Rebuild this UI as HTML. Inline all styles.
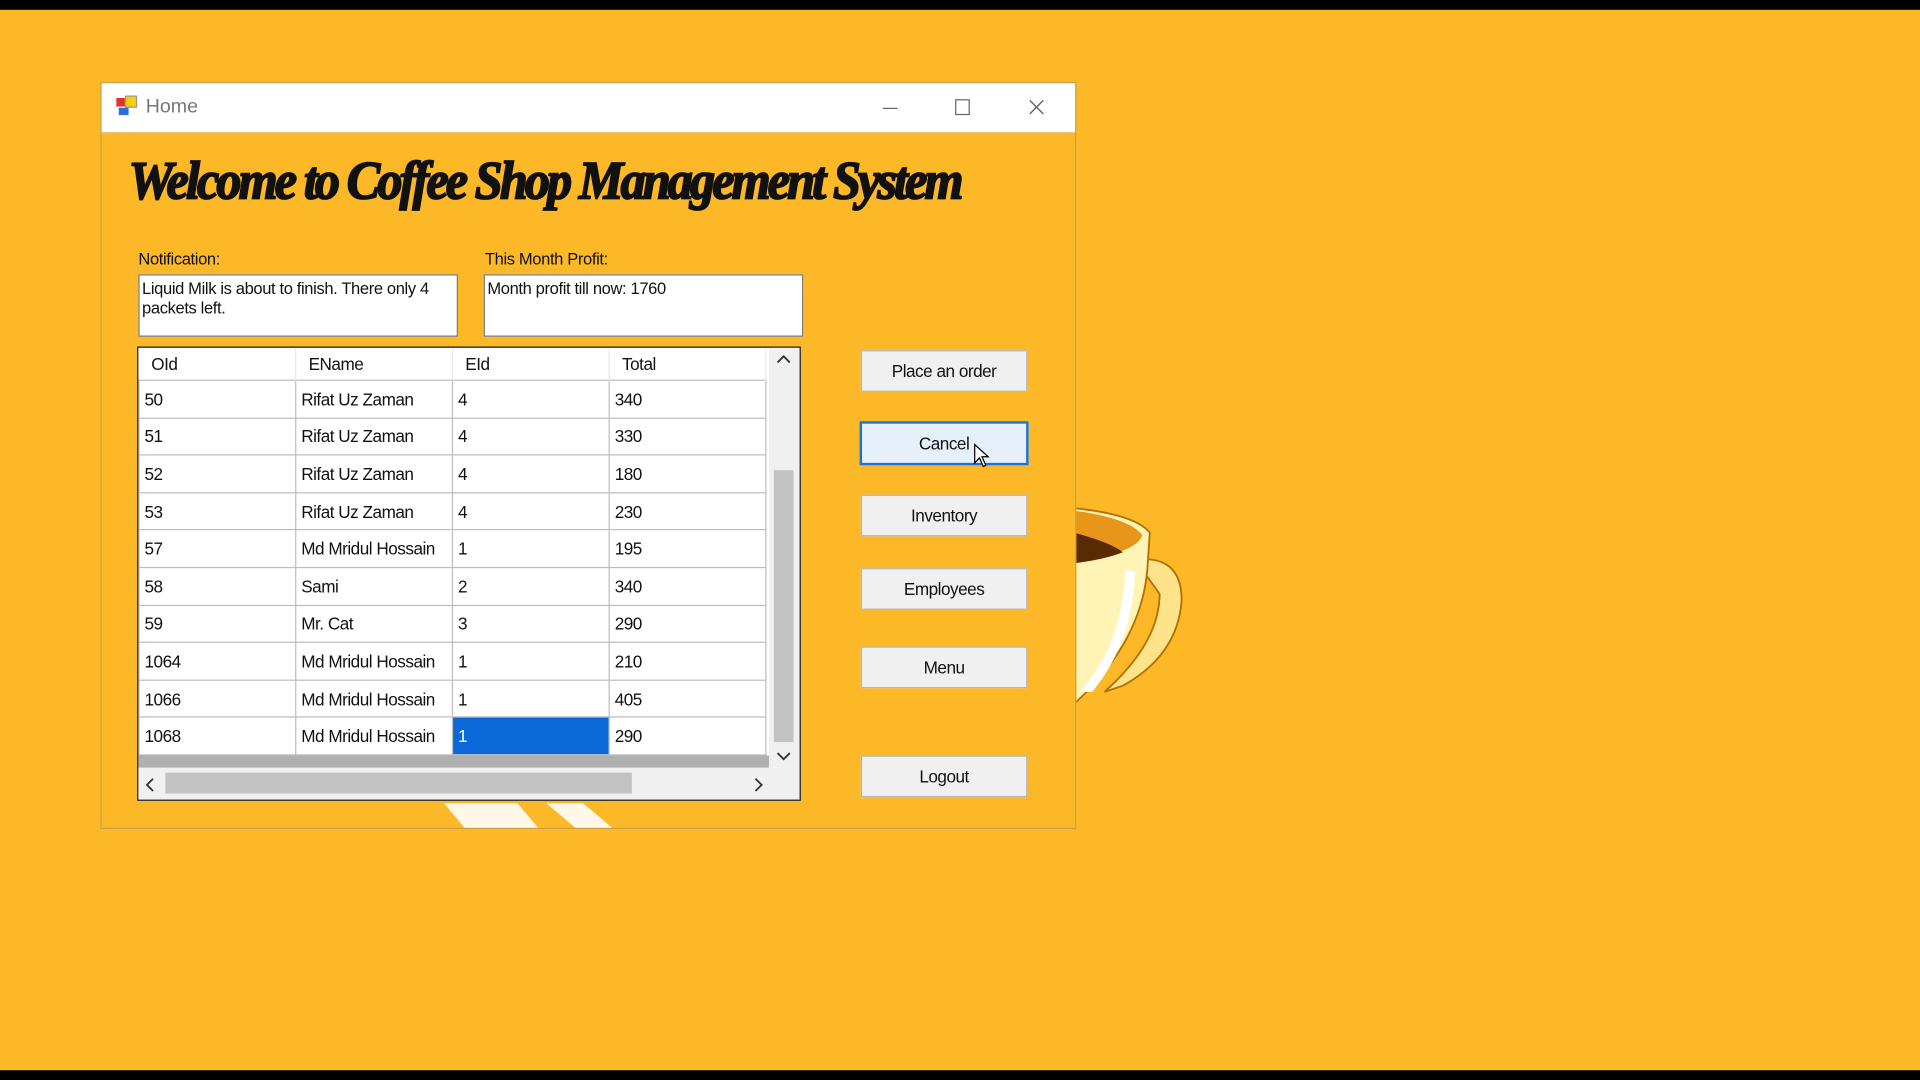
<!DOCTYPE html>
<html><head><meta charset="utf-8"><style>
html,body{margin:0;padding:0;width:1920px;height:1080px;overflow:hidden;background:#000}
#s{position:absolute;left:0;top:0;width:1568px;height:882px;transform:scale(1.22449);transform-origin:0 0;background:#fdb827;font-family:"Liberation Sans",Arial,sans-serif}
.a{position:absolute}
.bar{background:#000;left:0;width:1568px}
.win{left:82px;top:67px;width:795px;height:608px;border:1px solid #c9a14a;background:#fdb827}
.title{left:0;top:0;width:795px;height:40px;background:#fff;border-bottom:1px solid #d9b35e}
.lbl{font-size:13.5px;color:#111;letter-spacing:-0.3px}
.box{background:#fff;border:1px solid #777;font-size:13.5px;letter-spacing:-0.3px;padding:3px 2px;box-sizing:border-box;line-height:16px;color:#111}
.btn{background:#f0f0f0;border:1px solid #b5b5b5;font-size:14px;letter-spacing:-0.4px;text-align:center;line-height:32px;width:136px;height:34px;box-sizing:border-box;color:#111}
table{border-collapse:collapse;font-size:14px;letter-spacing:-0.4px;color:#111;table-layout:fixed}
td{border:1px solid #bdbdbd;height:30.6px;padding:0 0 0 4px;box-sizing:border-box;white-space:nowrap;overflow:hidden}
th{font-weight:normal;text-align:left;height:24px;padding-left:10px;border-right:1px solid #e8e8e8}
</style></head><body><div id="s">
<div class="a bar" style="top:0;height:8px"></div>
<div class="a bar" style="top:874px;height:8px"></div>
<svg class="a" style="left:877px;top:405px" width="100" height="180" viewBox="0 0 100 180">
<path d="M50 52 Q88 48 88 85 Q85 130 40 155 L25 160 Q70 120 70 80 Z" fill="#fde48a" stroke="#b56f00" stroke-width="1.5"/>
<path d="M0 10 Q50 15 62 30 L60 60 Q55 120 0 170 Z" fill="#fff3b5" stroke="#b56f00" stroke-width="1.5"/>
<path d="M0 12 Q45 18 56 32 Q50 48 0 52 Z" fill="#e8961a"/>
<path d="M0 30 Q30 38 40 46 Q25 52 0 55 Z" fill="#5a2a00"/>
<path d="M42 60 Q40 120 5 160 L15 160 Q48 120 50 62 Z" fill="#fff"/>
</svg>
<div class="a win">
 <div class="a title">
  <div class="a" style="left:12px;top:12px;width:7px;height:7px;background:#d33"></div>
  <div class="a" style="left:19px;top:10px;width:8px;height:8px;background:#f5d100;border:1px solid #999"></div>
  <div class="a" style="left:14px;top:20px;width:8px;height:6px;background:#2c6fd8"></div>
  <div class="a" style="left:36px;top:11px;font-size:16px;color:#777">Home</div>
  <div class="a" style="left:638px;top:20px;width:12px;height:1px;background:#666"></div>
  <div class="a" style="left:697px;top:13px;width:10px;height:11px;border:1px solid #666"></div>
  <svg class="a" style="left:757px;top:13px" width="13" height="13"><path d="M1 1L12 12M12 1L1 12" stroke="#666" stroke-width="1.2"/></svg>
 </div>
 <div class="a" style="left:22px;top:54px;font-family:'Liberation Serif',serif;font-style:italic;font-weight:bold;font-size:44px;letter-spacing:-2.5px;color:#111;transform:scaleX(0.93);transform-origin:0 0;white-space:nowrap;-webkit-text-stroke:1.5px #111">Welcome to Coffee Shop Management System</div>
 <div class="a lbl" style="left:30px;top:136px">Notification:</div>
 <div class="a lbl" style="left:313px;top:136px">This Month Profit:</div>
 <div class="a box" style="left:30px;top:156px;width:261px;height:51px">Liquid Milk is about to finish. There only 4 packets left.</div>
 <div class="a box" style="left:312px;top:156px;width:261px;height:51px">Month profit till now: 1760</div>
 <div class="a" style="left:29px;top:215px;width:540px;height:369px;border:1px solid #111;background:#fff;overflow:hidden">
  <table class="a" style="left:0;top:0;width:512px">
   <colgroup><col style="width:128px"><col style="width:128px"><col style="width:128px"><col style="width:128px"></colgroup>
   <tr><th>OId</th><th>EName</th><th>EId</th><th>Total</th></tr>
   <tr><td>50</td><td>Rifat Uz Zaman</td><td>4</td><td>340</td></tr>
   <tr><td>51</td><td>Rifat Uz Zaman</td><td>4</td><td>330</td></tr>
   <tr><td>52</td><td>Rifat Uz Zaman</td><td>4</td><td>180</td></tr>
   <tr><td>53</td><td>Rifat Uz Zaman</td><td>4</td><td>230</td></tr>
   <tr><td>57</td><td>Md Mridul Hossain</td><td>1</td><td>195</td></tr>
   <tr><td>58</td><td>Sami</td><td>2</td><td>340</td></tr>
   <tr><td>59</td><td>Mr. Cat</td><td>3</td><td>290</td></tr>
   <tr><td>1064</td><td>Md Mridul Hossain</td><td>1</td><td>210</td></tr>
   <tr><td>1066</td><td>Md Mridul Hossain</td><td>1</td><td>405</td></tr>
   <tr><td>1068</td><td>Md Mridul Hossain</td><td style="background:#0a68d8;color:#fff">1</td><td>290</td></tr>
  </table>
  <div class="a" style="left:0;top:333px;width:517px;height:10px;background:#b0b0b0"></div>
  <div class="a" style="left:515px;top:0;width:25px;height:343px;background:#f0f0f0"></div>
  <div class="a" style="left:519px;top:100px;width:16px;height:222px;background:#c2c2c2"></div>
  <svg class="a" style="left:521px;top:6px" width="12" height="8"><path d="M1 6L6 1L11 6" stroke="#333" fill="none" stroke-width="1.5"/></svg>
  <svg class="a" style="left:521px;top:330px" width="12" height="8"><path d="M1 1L6 6L11 1" stroke="#333" fill="none" stroke-width="1.5"/></svg>
  <div class="a" style="left:0;top:343px;width:540px;height:26px;background:#f0f0f0"></div>
  <div class="a" style="left:22px;top:347px;width:381px;height:17px;background:#c2c2c2"></div>
  <svg class="a" style="left:6px;top:351px" width="8" height="12"><path d="M6 1L1 6L6 11" stroke="#333" fill="none" stroke-width="1.5"/></svg>
  <svg class="a" style="left:503px;top:351px" width="8" height="12"><path d="M1 1L6 6L1 11" stroke="#333" fill="none" stroke-width="1.5"/></svg>
 </div>
 <div class="a" style="left:288px;top:588px;width:60px;height:20px;background:#fff;transform:skewX(40deg);opacity:.9"></div>
 <div class="a" style="left:375px;top:588px;width:30px;height:20px;background:#fff;transform:skewX(50deg);opacity:.9"></div>
 <div class="a btn" style="left:620px;top:218px">Place an order</div>
 <div class="a btn" style="left:619px;top:276px;width:138px;height:36px;border:2px solid #1a73d8;background:#e6f0fb">Cancel</div>
 <div class="a btn" style="left:620px;top:336px">Inventory</div>
 <div class="a btn" style="left:620px;top:396px">Employees</div>
 <div class="a btn" style="left:620px;top:460px">Menu</div>
 <div class="a btn" style="left:620px;top:549px">Logout</div>
 <svg class="a" style="left:712px;top:294px" width="16" height="22"><path d="M1 1 L1 16 L5 12 L8 19 L10 18 L7 11 L12 11 Z" fill="#fff" stroke="#000"/></svg>
</div>
</div></body></html>
